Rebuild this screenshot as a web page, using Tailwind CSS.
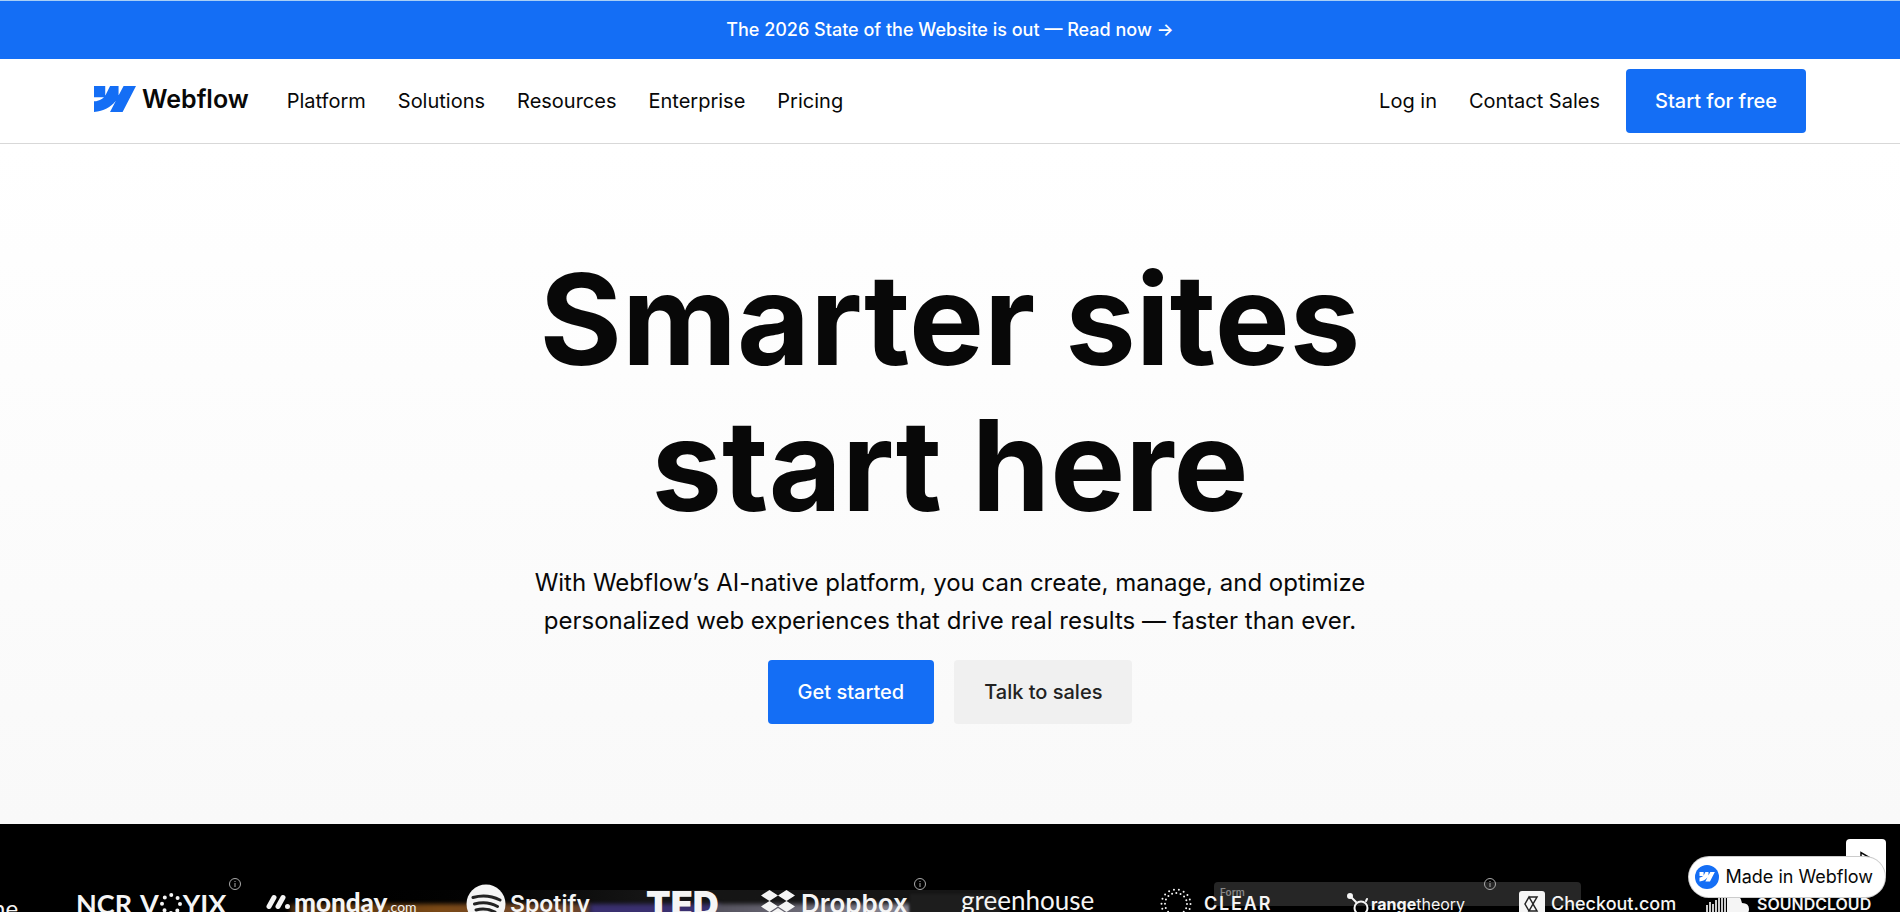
<!DOCTYPE html>
<html lang="en">
<head>
  <meta charset="UTF-8">
  <meta name="viewport" content="width=device-width, initial-scale=1.0">
  <title>Webflow</title>
  <script src="https://cdn.jsdelivr.net/npm/@tailwindcss/browser@4"></script>
</head>
<body class="bg-white text-[#080808] font-['Inter',sans-serif]">
  <div class="h-screen flex flex-col overflow-hidden relative">
    <!-- Announcement -->
    <a href="#" class="h-[59px] shrink-0 bg-[#146ef5] border-t border-[#a9cff5] flex items-center justify-center text-white text-lg font-medium">The 2026 State of the Website is out — Read now →</a>

    <!-- Header -->
    <header class="h-[85px] shrink-0 border-b border-[#d8d8d8] px-[94px] flex items-center">
      <a href="#" class="flex items-center gap-[6px] pb-1 mr-[38px]">
        <svg class="w-[42px] h-[26px]" viewBox="0 4.5 24 15" preserveAspectRatio="none" fill="#146ef5" aria-hidden="true">
          <path d="m24 4.515-7.658 14.97H9.149l3.205-6.204h-.144C9.566 16.713 5.621 18.973 0 19.485v-6.118s3.596-.213 5.71-2.435H0V4.515h6.417v5.278l.144-.001 2.622-5.277h4.854v5.244h.144l2.72-5.244H24Z"/>
        </svg>
        <span class="text-[25px] leading-8 font-semibold">Webflow</span>
      </a>
      <nav class="flex items-center gap-8 text-xl">
        <button>Platform</button>
        <button>Solutions</button>
        <button>Resources</button>
        <a href="#">Enterprise</a>
        <a href="#">Pricing</a>
      </nav>
      <div class="ml-auto flex items-center text-xl">
        <a href="#" class="mr-8">Log in</a>
        <a href="#" class="mr-[26px]">Contact Sales</a>
        <a href="#" class="h-16 px-[29px] rounded bg-[#146ef5] text-white font-medium flex items-center">Start for free</a>
      </div>
    </header>

    <!-- Hero -->
    <main class="h-[680px] shrink-0 bg-linear-to-b from-white to-[#f9f9f9] flex flex-col items-center pt-[102px] text-center">
      <h1 class="text-[126px] leading-[146px] font-bold">Smarter sites<br>start here</h1>
      <p class="mt-[26px] text-2xl leading-[38px]">With Webflow’s AI-native platform, you can create, manage, and optimize<br>personalized web experiences that drive real results — faster than ever.</p>
      <div class="mt-5 flex gap-5 text-xl font-medium">
        <a href="#" class="h-16 px-[30px] rounded bg-[#146ef5] text-white flex items-center">Get started</a>
        <a href="#" class="h-16 px-[30px] rounded bg-[#f0f0f0] text-[#222] flex items-center">Talk to sales</a>
      </div>
    </main>

    <!-- Customer logos -->
    <section class="grow bg-black text-[#f5f5f5] relative overflow-hidden">
      <!-- Showcase behind the logos -->
      <div class="absolute inset-x-0 top-[66px] h-[26px]">
        <div class="absolute left-[290px] right-[900px] inset-y-0 bg-linear-to-r from-black via-[#151515] to-[#151515]"></div>
        <div class="absolute left-[290px] w-[300px] top-[14px] bottom-0 bg-linear-to-r from-[#4a2c0c] via-[#7c4a16] to-[#6a4630] blur-[2px]"></div>
        <div class="absolute left-[590px] w-[130px] top-[14px] bottom-0 bg-[#3a3070] blur-[2px]"></div>
        <div class="absolute left-[715px] w-[195px] top-[14px] bottom-0 bg-linear-to-r from-[#55535f] to-[#8a8894] blur-[2px]"></div>
        <div class="absolute left-[910px] w-[90px] top-1 bottom-0 bg-[#1d1d1d] blur-[1px]"></div>
      </div>
      <div class="absolute left-[1214px] w-[367px] top-[58px] h-6 rounded-t bg-[#262626] pl-[6px] pt-1 text-left text-[10px] leading-3 text-[#888] font-semibold">Form</div>

      <ul class="relative mt-14 h-10 flex items-center whitespace-nowrap">
        <li class="w-[76px] shrink-0 -ml-2 mr-2 pt-4 text-2xl leading-7 font-['Lato',sans-serif]">ne</li>
        <li class="w-[190px] shrink-0 relative flex items-center gap-2 pt-2 text-[27px] leading-7 font-bold font-['Lato',sans-serif]">
          <span>NCR</span>
          <span class="flex items-center">V<svg class="w-6 h-6" viewBox="0 0 24 24" fill="none" stroke="#f5f5f5" stroke-width="4" stroke-linecap="round" stroke-dasharray="0 7.07" aria-hidden="true"><circle cx="12" cy="12" r="9"/></svg>YIX</span>
          <svg class="absolute left-[153px] -top-1 w-3 h-3" viewBox="0 0 12 12" fill="none" stroke="#aaa" aria-hidden="true"><circle cx="6" cy="6" r="5.500"/><path d="M6 5v4M6 3v1"/></svg>
        </li>
        <li class="w-[200px] shrink-0 flex items-center gap-1 pt-1">
          <svg class="w-6 h-4" viewBox="0 0 24 16" stroke="#f5f5f5" stroke-width="5" stroke-linecap="round" aria-hidden="true"><path d="M3 12.500 8 3.500M12 12.500 17 3.500M21.500 12.500v0"/></svg>
          <span class="text-[26px] leading-7 font-black font-['Lato',sans-serif]">monday<span class="text-sm font-normal">.com</span></span>
        </li>
        <li class="w-[180px] shrink-0 flex items-center gap-1 pt-2 text-[23px] leading-7 font-semibold">
          <svg class="w-10 h-10" viewBox="0 0 40 40" aria-hidden="true"><circle cx="20" cy="20" r="19.500" fill="#f5f5f5"/><path d="M7 13.500Q21 9.500 34 16M8.500 20Q21 16.500 31.500 22.500M10 26Q20 23.500 29 28" fill="none" stroke="#222" stroke-width="3" stroke-linecap="round"/></svg>
          <span>Spotify</span>
        </li>
        <li class="w-[115px] shrink-0 text-[36px] leading-8 pt-2 font-black">TED</li>
        <li class="w-[200px] shrink-0 relative flex items-center gap-[6px] text-[26px] leading-7 font-semibold pt-2">
          <svg class="w-[34px] h-7" viewBox="0 0 34 28" fill="#f5f5f5" aria-hidden="true"><path d="m8.500 0 8.500 5.500-8.500 5.500L0 5.500ZM25.500 0 34 5.500 25.500 11 17 5.500ZM8.500 11l8.500 5.500L8.500 22 0 16.500ZM25.500 11l8.500 5.500-8.500 5.500-8.500-5.500ZM17 18l8.500 5.500L17 28l-8.500-4.500Z"/></svg>
          <span>Dropbox</span>
          <svg class="absolute left-[153px] -top-1 w-3 h-3" viewBox="0 0 12 12" fill="none" stroke="#aaa" aria-hidden="true"><circle cx="6" cy="6" r="5.500"/><path d="M6 5v4M6 3v1"/></svg>
        </li>
        <li class="w-[199px] shrink-0 text-[26px] leading-7 font-['Lato',sans-serif]">greenhouse</li>
        <li class="w-[187px] shrink-0 flex items-center gap-3 pt-2">
          <svg class="w-8 h-8" viewBox="0 0 32 32" fill="none" stroke="#f5f5f5" stroke-width="2" stroke-linecap="round" aria-hidden="true"><circle cx="16" cy="16" r="14.500" stroke-dasharray="0 5.060"/><circle cx="16" cy="16" r="11" stroke-dasharray="0 4.320"/></svg>
          <span class="text-lg leading-7 font-semibold tracking-widest">CLEAR</span>
        </li>
        <li class="w-[172px] shrink-0 relative flex items-center pt-2 text-base">
          <svg class="w-6 h-7" viewBox="0 0 24 28" fill="none" stroke="#f5f5f5" stroke-width="2" stroke-linecap="round" aria-hidden="true"><circle cx="14" cy="18" r="6.500"/><circle cx="3" cy="6" r="2" fill="#f5f5f5"/><path d="m4 7 5 5M19 11l1-2"/></svg>
          <span><b>range</b>theory</span>
          <svg class="absolute left-[137px] -top-1 w-3 h-3" viewBox="0 0 12 12" fill="none" stroke="#aaa" aria-hidden="true"><circle cx="6" cy="6" r="5.500"/><path d="M6 5v4M6 3v1"/></svg>
        </li>
        <li class="w-[187px] shrink-0 flex items-center gap-[6px] pt-2 text-lg font-medium">
          <svg class="w-[26px] h-[26px]" viewBox="0 0 26 26" fill="none" stroke="#222" stroke-width="1.500" aria-hidden="true"><rect width="26" height="26" rx="3" fill="#f5f5f5" stroke="none"/><path d="M10 6h8l-8 14h8L10 6 6 13l4 7M18 6l-4 7 4 7"/></svg>
          <span>Checkout.com</span>
        </li>
        <li class="shrink-0 flex items-center gap-2 pt-2 text-base font-semibold">
          <svg class="w-[43px] h-[22px]" viewBox="0 0 43 22" aria-hidden="true"><path d="M1 22V12M4 22V9M7 22V11M10 22V7M13 22V5M16 22V4M19 22V3" stroke="#ccc" stroke-width="2"/><path d="M21 22V2q12-5 15 8 7 0 7 6t-7 6Z" fill="#f5f5f5"/></svg>
          <span>SOUNDCLOUD</span>
        </li>
      </ul>
    </section>

    <!-- Floating controls -->
    <button aria-label="Play" class="absolute right-[14px] bottom-[33px] w-10 h-10 rounded bg-white text-[#080808] flex items-center justify-center">
      <svg class="w-4 h-4" viewBox="0 0 16 16" fill="none" stroke="currentColor" stroke-width="1.500" aria-hidden="true"><path d="M3 1.500v13L14 8Z"/></svg>
    </button>
    <a href="#" class="absolute right-[14px] bottom-[14px] h-[42px] pl-[6px] pr-3 rounded-full border border-black/20 bg-white flex items-center gap-[6px] text-lg">
      <svg class="w-6 h-6" viewBox="0 0 24 24" aria-hidden="true"><circle cx="12" cy="12" r="12" fill="#146ef5"/><path transform="translate(4.500 7) scale(.64)" fill="#fff" d="m24 0-7.658 14.970H9.149l3.205-6.204h-.144C9.566 12.198 5.621 14.458 0 14.970V8.852s3.596-.213 5.710-2.435H0V0h6.417v5.278l.144-.001L9.183 0h4.854v5.244h.144L16.901 0H24Z"/></svg>
      Made in Webflow
    </a>
  </div>
</body>
</html>
